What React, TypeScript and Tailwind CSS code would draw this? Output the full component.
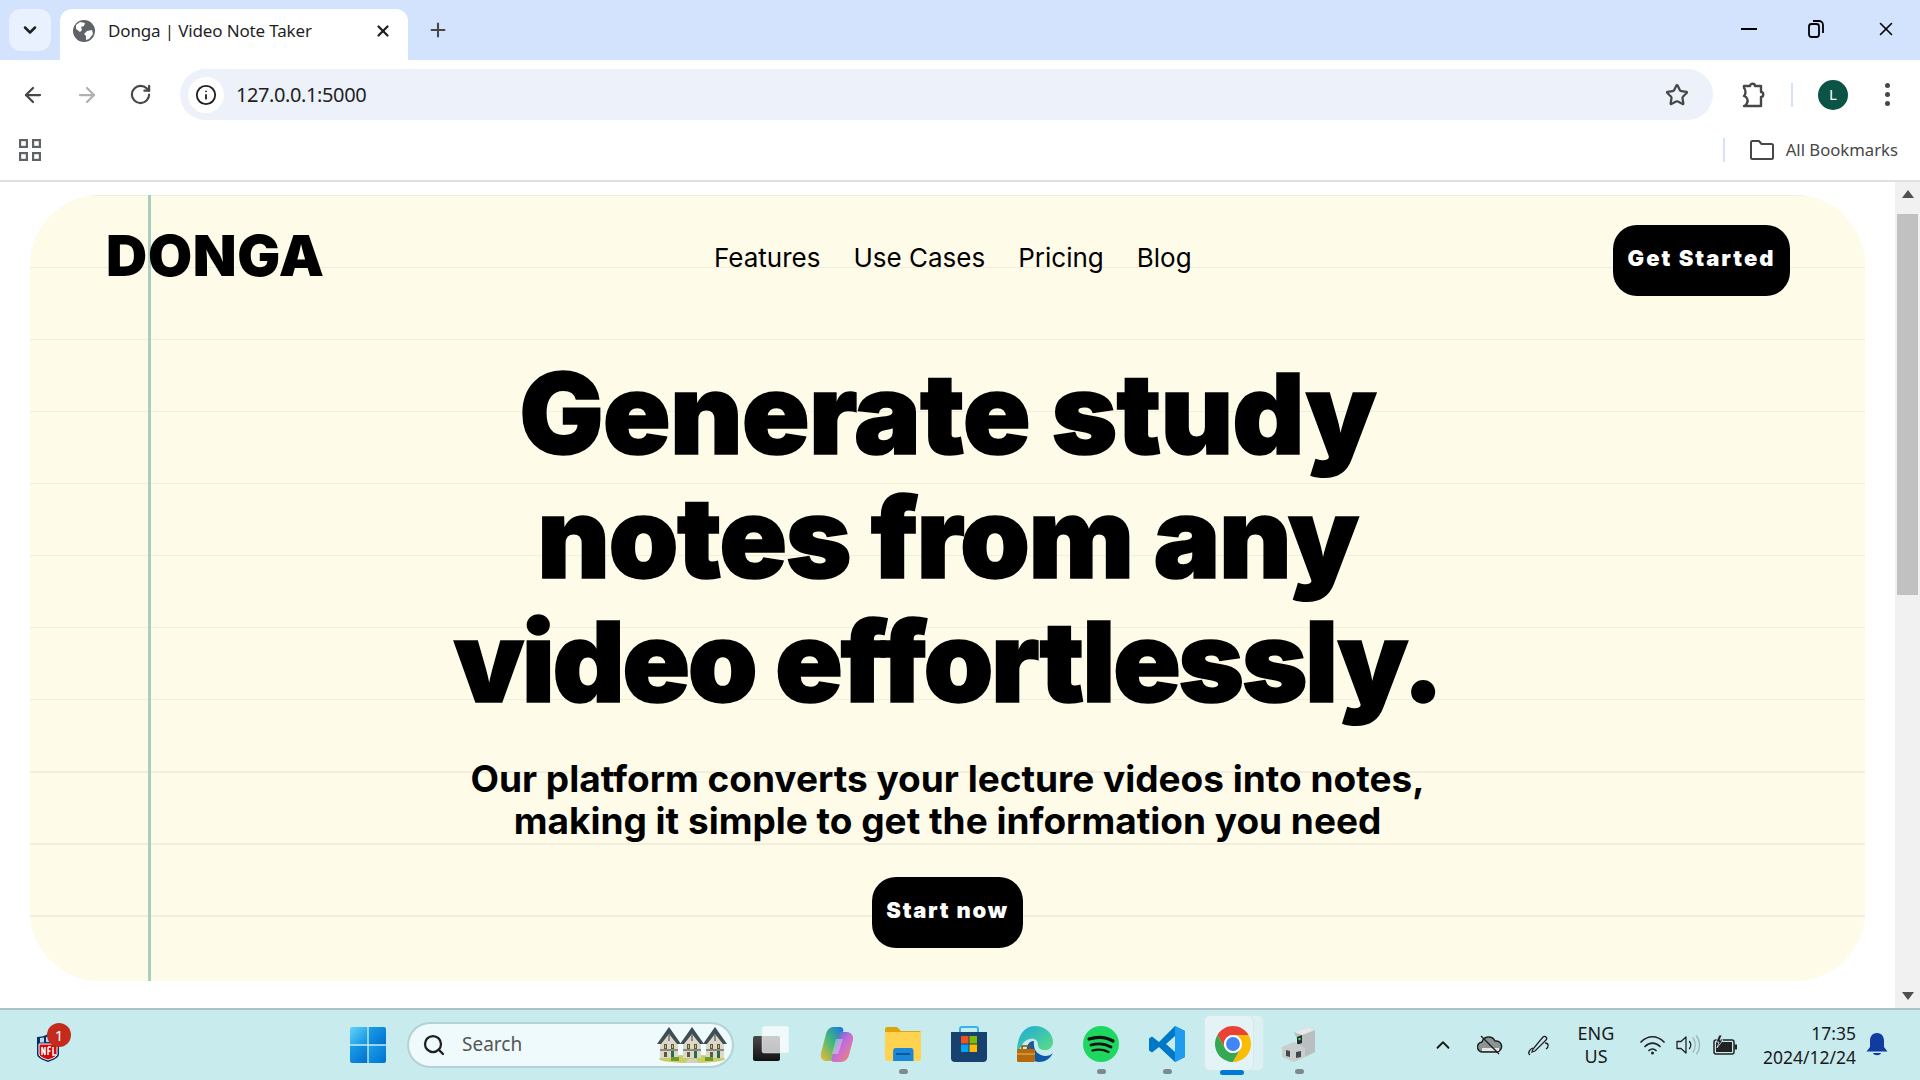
import React from 'react';
import { ArrowLeft, ArrowRight, ChevronDown, ChevronUp, Info, Plus, RotateCw, Search, Star, X } from 'lucide-react';

const UI_FONT = "font-['Noto_Sans','Open_Sans',sans-serif]";

const Favicon = () => (
  <svg width="22" height="22" viewBox="0 0 22 22">
    <circle cx="11" cy="11" r="11" fill="#5f6368" />
    <path d="M3 5l4-3 5 1-1 3-3 1 1 3-2 2-4-3zM14 11l5-1 1 4-4 5-3 1 0-4-2-2z" fill="#fff" />
  </svg>
);

const AppsIcon = () => (
  <svg width="22" height="22" viewBox="0 0 22 22" fill="none" stroke="#5f6368" strokeWidth="2.2">
    <rect x="1.100" y="1.100" width="6.800" height="6.800" />
    <rect x="14.100" y="1.100" width="6.800" height="6.800" />
    <rect x="1.100" y="14.100" width="6.800" height="6.800" />
    <rect x="14.100" y="14.100" width="6.800" height="6.800" />
  </svg>
);

const ExtensionIcon = () => (
  <svg width="26" height="28" viewBox="0 0 26 28" fill="none" stroke="#474747" strokeWidth="2.4" strokeLinejoin="round">
    <path d="M3 5h6c0-3 5-3 5 0h6v6c3 0 3 5 0 5v9H3l2-1c2-3 2-6 0-8l-2-1c2-2 2-6 0-8z" />
  </svg>
);

const FolderIcon = () => (
  <svg width="24" height="20" viewBox="0 0 24 20" fill="none" stroke="#474747" strokeWidth="2" strokeLinejoin="round">
    <path d="M1 2.5A1.5 1.5 0 0 1 2.5 1h6.5l2.5 3h10A1.5 1.5 0 0 1 23 5.500V17.500a1.500 1.500 0 0 1-1.500 1.500H2.500A1.500 1.500 0 0 1 1 17.500z" />
  </svg>
);

const NflIcon = () => (
  <svg width="24" height="30" viewBox="0 0 24 30">
    <path d="M1 4c4 0 8-1 11-3 3 2 7 3 11 3v17c0 4-6 6-11 8-5-2-11-4-11-8z" fill="#013369" />
    <path d="M3 11h18v10c0 3-5 4.500-9 6-4-1.500-9-3-9-6z" fill="#d50a0a" stroke="#fff" strokeWidth="1" />
    <path d="M4 5l4-.5v5H4zM10 4h4v5h-4z" fill="#fff" opacity="0.8" />
    <path d="M6 14v8M9 14v8M6 14l3 8M12 14v8M12 14h3M12 18h2.500M17 14v8h3" fill="none" stroke="#fff" strokeWidth="1.500" />
  </svg>
);

const WindowsIcon = () => (
  <svg width="36" height="36" viewBox="0 0 36 36">
    <defs>
      <linearGradient id="wa" x1="0" y1="0" x2="1" y2="1">
        <stop offset="0" stopColor="#5fd4fb" />
        <stop offset="1" stopColor="#0e8fe0" />
      </linearGradient>
      <linearGradient id="wb" x1="0" y1="0" x2="1" y2="1">
        <stop offset="0" stopColor="#1aa0ea" />
        <stop offset="1" stopColor="#0070cf" />
      </linearGradient>
    </defs>
    <path d="M2 0h15.300v17.300H0V2a2 2 0 0 1 2-2z" fill="url(#wa)" />
    <path d="M18.700 0H34a2 2 0 0 1 2 2v15.300H18.700z" fill="url(#wb)" />
    <path d="M0 18.700h17.300V36H2a2 2 0 0 1-2-2z" fill="url(#wb)" />
    <path d="M18.700 18.700H36V34a2 2 0 0 1-2 2H18.700z" fill="url(#wb)" />
  </svg>
);

const House = ({ x }: { x: number }) => (
  <g transform={`translate(${x} 0)`}>
    <path d="M2 14L11 0l9 14v17H2z" fill="#dcd8cc" />
    <path d="M-1 17L11 0l12 17-4 0L11 7 3 17z" fill="#3f4d55" />
    <path d="M11 1l3 5h-6z" fill="#3f4d55" />
    <path d="M6 17h3v5H6zM13 17h3v5h-3zM6 25h3v5H6z" fill="#5b5a3a" />
    <path d="M7 18h1v3H7zM14 18h1v3h-1z" fill="#e0c23f" />
    <path d="M13 24h3v7h-3z" fill="#2f6b45" />
    <path d="M2 23h18M11 8v6" stroke="#3a3a3a" strokeWidth="1" />
  </g>
);

const HousesIcon = () => (
  <svg width="70" height="36" viewBox="0 0 70 36">
    <ellipse cx="35" cy="32" rx="33" ry="4" fill="#c7cf63" />
    <House x={1} />
    <House x={24} />
    <House x={47} />
    <path d="M14 30h8v4h-8zM48 30h8v4h-8z" fill="#6f9a2e" />
    <path d="M31 32h8l3 4H28z" fill="#d4d0c8" />
  </svg>
);

const TaskViewIcon = () => (
  <svg width="36" height="36" viewBox="0 0 36 36">
    <defs>
      <linearGradient id="tv" x1="0" y1="0" x2="0" y2="1">
        <stop offset="0" stopColor="#4a4a4a" />
        <stop offset="1" stopColor="#111" />
      </linearGradient>
    </defs>
    <rect x="0" y="10" width="27" height="25" rx="2" fill="url(#tv)" />
    <rect x="9" y="0" width="27" height="27" rx="2" fill="#fff" fillOpacity="0.72" stroke="#e0e6e8" strokeWidth="0.500" />
  </svg>
);

const CopilotIcon = () => (
  <svg width="34" height="36" viewBox="0 0 34 36">
    <defs>
      <linearGradient id="ca" x1="0" y1="1" x2="1" y2="0">
        <stop offset="0" stopColor="#f5b92f" />
        <stop offset="0.500" stopColor="#45b87b" />
        <stop offset="1" stopColor="#1473e6" />
      </linearGradient>
      <linearGradient id="cb" x1="0" y1="0" x2="1" y2="1">
        <stop offset="0" stopColor="#2a6fdb" />
        <stop offset="0.500" stopColor="#c86dd7" />
        <stop offset="1" stopColor="#f98a52" />
      </linearGradient>
    </defs>
    <path d="M13 1h7c2 0 3 1 3.500 3L15 30c-1 3-3 5-6 5H6c-4 0-6-4-5-8l5-19c1-4 4-7 7-7z" fill="url(#ca)" />
    <path d="M18 6h9c4 0 7 4 6 8l-4 15c-1 4-4 7-8 7h-7c-2 0-3-1-2.500-3L20 8z" fill="url(#cb)" />
    <path d="M16 13h7l-5 15h-6z" fill="#fff" fillOpacity="0.35" />
  </svg>
);

const ExplorerIcon = () => (
  <svg width="36" height="34" viewBox="0 0 36 34">
    <path d="M0 2a2 2 0 0 1 2-2h10l4 4h18a2 2 0 0 1 2 2v6H0z" fill="#e0a30a" />
    <path d="M0 5h36v27a2 2 0 0 1-2 2H2a2 2 0 0 1-2-2z" fill="#ffd24f" />
    <path d="M6 34V24a3 3 0 0 1 3-3h18a3 3 0 0 1 3 3v10z" transform="translate(3 0) scale(0.85 1)" fill="#1b87d6" />
    <path d="M11 27h14" stroke="#0b5a9c" strokeWidth="2" />
  </svg>
);

const StoreIcon = () => (
  <svg width="36" height="36" viewBox="0 0 36 36">
    <path d="M9 7V3a2 2 0 0 1 2-2h14a2 2 0 0 1 2 2v4" fill="none" stroke="#35b5ee" strokeWidth="2" />
    <path d="M0 6h36v26a4 4 0 0 1-4 4H4a4 4 0 0 1-4-4z" fill="#17416f" />
    <rect x="10" y="10" width="7.500" height="7.500" fill="#f25022" />
    <rect x="18.500" y="10" width="7.500" height="7.500" fill="#7fba00" />
    <rect x="10" y="18.500" width="7.500" height="7.500" fill="#00a4ef" />
    <rect x="18.500" y="18.500" width="7.500" height="7.500" fill="#ffb900" />
  </svg>
);

const EdgeIcon = () => (
  <svg width="36" height="36" viewBox="0 0 36 36">
    <defs>
      <linearGradient id="ea" x1="0" y1="0" x2="1" y2="1">
        <stop offset="0" stopColor="#1ea8dd" />
        <stop offset="1" stopColor="#5fe07e" />
      </linearGradient>
    </defs>
    <path d="M18 0c10 0 18 7 18 16 0 5-4 9-9 8-3 0-6-2-6-5 0-3-1-5-4-6-5-1-10 2-12 6-2 3-3 6-5 7C0 12 6 0 18 0z" fill="url(#ea)" />
    <path d="M17 15c-5 0-8 5-7 10 1 5 6 11 12 11 6 0 11-3 14-9-3 3-8 4-12 2-5-2-8-7-7-14z" fill="#0f5aa8" />
    <rect x="0" y="23" width="18" height="13" rx="1.500" fill="#b66a10" />
    <path d="M5 23v-3h8v3" fill="none" stroke="#8c4f0a" strokeWidth="1.500" />
    <path d="M0 28h18" stroke="#e0a030" strokeWidth="1.500" />
  </svg>
);

const SpotifyIcon = () => (
  <svg width="36" height="36" viewBox="0 0 36 36">
    <circle cx="18" cy="18" r="18" fill="#1ed760" />
    <path d="M6 13c8-2.500 17-2 24 2" fill="none" stroke="#111" strokeWidth="3.200" strokeLinecap="round" />
    <path d="M8 19c7-2 14-1.500 20 2" fill="none" stroke="#111" strokeWidth="2.800" strokeLinecap="round" />
    <path d="M9.500 24.500c5.500-1.500 11-1 16 1.500" fill="none" stroke="#111" strokeWidth="2.300" strokeLinecap="round" />
  </svg>
);

const VsCodeIcon = () => (
  <svg width="36" height="36" viewBox="0 0 36 36">
    <path d="M26 0l10 5v26l-10 5-16-15-7 5.500-3-2v-12l3-2 7 5.500zM26 10l-9 8 9 8z" fill="#0078c8" />
    <path d="M26 0l10 5v26l-10 5z" fill="#1f9cf0" />
  </svg>
);

const ChromeIcon = () => (
  <svg width="36" height="36" viewBox="2 2 44 44">
    <path d="M4.950 13A22 22 0 0 1 43.050 13H24A11 11 0 0 0 14.470 29.500z" fill="#ea4335" />
    <path d="M4.950 13A22 22 0 0 0 24 46L33.530 29.500A11 11 0 0 1 14.470 29.500z" fill="#34a853" />
    <path d="M43.050 13A22 22 0 0 1 24 46L33.530 29.500A11 11 0 0 0 24 13z" fill="#fbbc04" />
    <circle cx="24" cy="24" r="11" fill="#fff" />
    <circle cx="24" cy="24" r="8.500" fill="#4285f4" />
  </svg>
);

const DeviceIcon = () => (
  <svg width="34" height="36" viewBox="0 0 34 36">
    <path d="M12 6l14-5 7 3v22l-10 5z" fill="#b9bfc0" />
    <path d="M12 6l14-5 7 3-13 5z" fill="#e4e8e8" />
    <path d="M15 11l5-2v8l-5 2z" fill="#24332c" />
    <circle cx="17.500" cy="13" r="1.200" fill="#4fe06f" />
    <path d="M0 21l12-5 11 6v9l-11 5-12-5z" fill="#c9cdce" />
    <path d="M4 24l4 1v6l-4-1zM14 26l5-1v6l-5 1z" fill="#44484a" />
  </svg>
);

const TaskbarApp = ({ running, children }: { running?: boolean; children: React.ReactNode }) => (
  <div className="relative w-[66px] h-[72px] flex items-center justify-center -mt-[2px]">
    {children}
    {running && <span className="absolute bottom-[6px] w-[9px] h-[5px] rounded-full bg-[#7b8a8f]" />}
  </div>
);

const App: React.FC = () => {
  return (
    <div className={`w-[1920px] h-[1080px] flex flex-col overflow-hidden bg-white ${UI_FONT}`}>
      {/* tab strip */}
      <div className="h-[60px] bg-[#d3e3fd] flex items-end shrink-0 relative">
        <div className="absolute left-[9px] top-[9px] w-[42px] h-[42px] rounded-xl bg-[#eaf1fe] flex items-center justify-center">
          <ChevronDown className="w-5 h-5 text-[#1f1f1f]" strokeWidth={3} />
        </div>
        <div className="ml-[60px] w-[348px] h-[51px] bg-white rounded-t-xl flex items-center pl-[13px] pb-[8px]">
          <Favicon />
          <span className="ml-[13px] w-[266px] text-[17px] tracking-[-0.15px] text-[#1f1f1f] whitespace-nowrap">Donga | Video Note Taker</span>
          <X className="w-[18px] h-[18px] text-[#1f1f1f]" strokeWidth={3} />
        </div>
        <Plus className="ml-[19px] mb-[19px] w-[22px] h-[22px] text-[#474747]" strokeWidth={2.25} />
        <div className="ml-auto flex items-center pr-[23px] gap-[51px] mb-[20px] text-black">
          <span className="w-[16px] h-[2.500px] bg-black" />
          <svg width="16" height="18" viewBox="0 0 16 18" fill="none" stroke="#000" strokeWidth="1.800">
            <rect x="1" y="4" width="10" height="13" rx="2.500" />
            <path d="M5 1h6a4 4 0 0 1 4 4v8" />
          </svg>
          <X className="w-[22px] h-[22px]" strokeWidth={1.75} />
        </div>
      </div>

      {/* toolbar */}
      <div className="h-[62px] shrink-0 flex items-start pt-[9px] rounded-t-xl bg-white relative">
        <div className="w-[180px] h-[51px] flex items-center pl-[21px] gap-[30px]">
          <ArrowLeft className="w-6 h-6 text-[#474747]" strokeWidth={2.25} />
          <ArrowRight className="w-6 h-6 text-[#b0b0b0]" strokeWidth={2.25} />
          <RotateCw className="w-[23px] h-[23px] text-[#474747]" strokeWidth={2.25} />
        </div>
        <div className="w-[1533px] h-[51px] rounded-full bg-[#ecf1fa] flex items-center pl-[8px] pr-[24px]">
          <div className="w-[36px] h-[36px] rounded-full bg-white flex items-center justify-center">
            <Info className="w-[22px] h-[22px] text-[#1f1f1f]" strokeWidth={2} />
          </div>
          <span className="ml-[12px] text-[20px] tracking-[-0.4px] text-[#1f1f1f]">127.0.0.1:5000</span>
          <Star className="ml-auto w-[24px] h-[24px] text-[#474747]" strokeWidth={2.25} />
        </div>
        <div className="flex-1 h-[51px] flex items-center pl-[28px]">
          <ExtensionIcon />
          <span className="ml-[24px] w-[2px] h-[24px] bg-[#d3e3fd]" />
          <span className="ml-[25px] w-[30px] h-[30px] rounded-full bg-[#0b5345] text-white text-[15px] flex items-center justify-center">L</span>
          <span className="ml-[37px] flex flex-col gap-[4px]">
            <span className="w-[5px] h-[5px] rounded-full bg-[#474747]" />
            <span className="w-[5px] h-[5px] rounded-full bg-[#474747]" />
            <span className="w-[5px] h-[5px] rounded-full bg-[#474747]" />
          </span>
        </div>
      </div>

      {/* bookmarks bar */}
      <div className="h-[60px] shrink-0 border-b-2 border-[#e0e0e0] flex items-center pl-[19px] pr-[22px] pb-[2px]">
        <AppsIcon />
        <span className="ml-auto w-[2px] h-[24px] bg-[#d3e3fd]" />
        <span className="ml-[25px]"><FolderIcon /></span>
        <span className="ml-[12px] text-[16.7px] text-[#474747] whitespace-nowrap">All Bookmarks</span>
      </div>

      {/* page */}
      <div className="flex-1 flex min-h-0">
        <div className="flex-1 pt-[13px] pl-[30px] pr-[30px]">
          <div className="relative h-[786px] rounded-[70px] overflow-hidden bg-[#fefbe8] bg-[repeating-linear-gradient(to_bottom,#f1eedb_0,#f1eedb_1.5px,transparent_1.5px,transparent_72px)] font-['Inter',sans-serif] text-black">
            <div className="absolute left-[118px] top-0 bottom-0 w-[3px] bg-[#aacfc2]" />
            <div className="relative">
              <header className="h-[102px] flex items-start">
                <span className="ml-[76px] mt-[27px] text-[57px] leading-[68px] font-black tracking-[0.7px]">DONGA</span>
                <nav className="absolute left-[684px] top-[44px] flex gap-[33px] text-[26px] leading-[38px] whitespace-nowrap">
                  <span>Features</span>
                  <span>Use Cases</span>
                  <span>Pricing</span>
                  <span>Blog</span>
                </nav>
                <button className="ml-auto mr-[75px] mt-[30px] w-[177px] h-[71px] pb-[4px] rounded-[24px] bg-black text-white text-[22px] font-black tracking-[2px]">Get Started</button>
              </header>
              <h1 className="mt-[54px] text-center text-[112px] leading-[124px] font-black [-webkit-text-stroke:1.5px_black]">
                <span className="tracking-[-0.8px]">Generate study</span><br />
                <span className="tracking-[-1.5px]">notes from any</span><br />
                <span className="tracking-[-2.5px]">video effortlessly.</span>
              </h1>
              <p className="mt-[35px] text-center text-[37px] leading-[42px] font-bold">
                Our platform converts your lecture videos into notes,<br />making it simple to get the information you need
              </p>
              <div className="mt-[35px] flex justify-center">
                <button className="w-[151px] h-[71px] pb-[4px] rounded-[24px] bg-black text-white text-[22px] font-black tracking-[1.7px]">Start now</button>
              </div>
            </div>
          </div>
        </div>
        {/* scrollbar */}
        <div className="w-[25px] bg-[#f1f1f1] flex flex-col items-center pt-[8px] pb-[8px]">
          <span className="w-0 h-0 border-x-[6px] border-x-transparent border-b-[8px] border-b-[#505050]" />
          <span className="mt-[16px] w-[21px] h-[381px] bg-[#c1c1c1]" />
          <span className="mt-auto w-0 h-0 border-x-[6px] border-x-transparent border-t-[8px] border-t-[#505050]" />
        </div>
      </div>

      {/* taskbar */}
      <div className="h-[72px] shrink-0 border-t-2 border-[#aec2c5] bg-[#c8ebee] flex items-center relative">
        <div className="ml-[36px] mt-[6px] relative">
          <NflIcon />
          <span className="absolute -top-[10px] left-[11px] w-[24px] h-[24px] rounded-full bg-[#c42b1c] text-white text-[15px] flex items-center justify-center">1</span>
        </div>
        <div className="ml-[290px] -mt-[1px]">
          <WindowsIcon />
        </div>
        <div className="ml-[21px] w-[327px] h-[46px] -mt-[1px] rounded-full bg-[#eefafb] border-2 border-[#b4d2d5] flex items-center pl-[13px] pr-[5px]">
          <Search className="w-[24px] h-[24px] text-[#1f1f1f]" strokeWidth={2.25} />
          <span className="ml-[16px] text-[19px] text-[#555]">Search</span>
          <span className="ml-auto"><HousesIcon /></span>
        </div>
        <div className="ml-[4px] flex items-center">
          <TaskbarApp><TaskViewIcon /></TaskbarApp>
          <TaskbarApp><CopilotIcon /></TaskbarApp>
          <TaskbarApp running><ExplorerIcon /></TaskbarApp>
          <TaskbarApp><StoreIcon /></TaskbarApp>
          <TaskbarApp><EdgeIcon /></TaskbarApp>
          <TaskbarApp running><SpotifyIcon /></TaskbarApp>
          <TaskbarApp running><VsCodeIcon /></TaskbarApp>
          <div className="relative w-[66px] h-[72px] flex items-center justify-center -mt-[2px]">
            <span className="absolute left-[8px] top-[7px] w-[56px] h-[56px] rounded-md bg-[#dbf1f3] border border-[#d5e8ea]" />
            <span className="absolute left-[4px] top-[7px] w-[50px] h-[56px] rounded-md bg-[#e4f4f6] border border-[#d5e8ea]" />
            <span className="relative"><ChromeIcon /></span>
            <span className="absolute bottom-[5px] left-[20px] w-[24px] h-[5px] rounded-full bg-[#0078d4]" />
          </div>
          <TaskbarApp running><DeviceIcon /></TaskbarApp>
        </div>
        <div className="ml-auto flex items-center pr-[32px] text-[#1a1a1a]">
          <ChevronUp className="w-[22px] h-[22px]" strokeWidth={2} />
          <svg className="ml-[23px]" width="26" height="22" viewBox="0 0 26 22">
            <path d="M6 18a5 5 0 0 1-1-10 7 7 0 0 1 13-1 5.500 5.500 0 0 1 2 11z" fill="#8b9496" stroke="#222" strokeWidth="1.500" />
            <path d="M5 14h17v3H5z" fill="#e4e8e8" />
            <path d="M4 2l18 18" stroke="#222" strokeWidth="1.500" />
          </svg>
          <svg className="ml-[24px]" width="24" height="24" viewBox="0 0 24 24" fill="none" stroke="#222" strokeWidth="1.300">
            <path d="M8 18l-3 1 1-3L16 4c2-2 5 1 3 3z" />
            <path d="M3 22c-3-2 0-6 3-7M18 10c4 0 4 4 1 6" />
          </svg>
          <div className="ml-[22px] w-[46px] text-[18px] leading-[23px] text-center">ENG<br />US</div>
          <svg className="ml-[21px]" width="25" height="20" viewBox="0 0 25 20" fill="none" stroke="#222" strokeWidth="1.700" strokeLinecap="round">
            <path d="M1 7c7-7 16-7 23 0M5 11.500c4.500-4.500 10.500-4.500 15 0M9 15.500c2-2 5-2 7 0" />
            <circle cx="12.500" cy="18" r="1.500" fill="#222" stroke="none" />
          </svg>
          <svg className="ml-[11px]" width="25" height="22" viewBox="0 0 25 22" fill="none" stroke="#222" strokeWidth="1.300" strokeLinejoin="round">
            <path d="M1 7.500h4L10 3v16l-5-4.500H1z" />
            <path d="M13.500 7.500c1.500 2 1.500 5 0 7" strokeLinecap="round" />
            <path d="M17 4c3 4 3 10 0 14M20.500 2c4 5 4 13 0 18" stroke="#9fb6b9" strokeLinecap="round" />
          </svg>
          <svg className="ml-[12px]" width="24" height="20" viewBox="0 0 24 20">
            <rect x="1" y="5" width="20" height="14" rx="2" fill="none" stroke="#222" strokeWidth="1.500" />
            <rect x="3" y="7" width="16" height="10" fill="#222" />
            <rect x="21.500" y="9.500" width="2.500" height="5" fill="#222" />
            <path d="M6 0L3 7h3l-2 6 6-8H7l2-5z" fill="#222" stroke="#c8ebee" strokeWidth="0.800" />
          </svg>
          <div className="ml-[17px] w-[102px] text-[17.5px] leading-[24px] text-right whitespace-nowrap">17:35<br />2024/12/24</div>
          <svg className="ml-[10px]" width="22" height="24" viewBox="0 0 22 24">
            <path d="M11 0c5 0 7 4 7 8v6l3.500 4.500H.500L4 14V8c0-4 2-8 7-8z" fill="#0f3c9e" />
            <path d="M7 20h8c-1 3-7 3-8 0z" fill="#0f3c9e" />
          </svg>
        </div>
      </div>
    </div>
  );
};

export default App;
